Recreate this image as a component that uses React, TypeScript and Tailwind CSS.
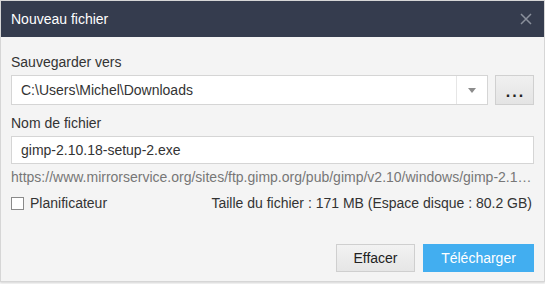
import React from "react";

export default function App() {
  return (
    <div className="w-[545px] h-[284px] bg-[#fafafa]" style={{ fontFamily: '"Liberation Sans", Arial, sans-serif' }}>
      <div className="w-[545px] h-[282px] border border-[#d6d6d6] bg-[#f4f4f4] flex flex-col shadow-[0_1px_2px_rgba(0,0,0,0.15)]">
        <div className="h-[36px] bg-[#353c4e] flex items-center justify-between pl-[10px] pr-[12px]">
          <span className="text-white text-[14px]">Nouveau fichier</span>
          <svg width="12" height="12" viewBox="0 0 12 12" className="text-[#8a909c]">
            <path d="M1 1 L11 11 M11 1 L1 11" stroke="currentColor" strokeWidth="1.5" />
          </svg>
        </div>
        <div className="flex flex-col px-[10px] text-[14px] leading-[16px] text-[#333]">
          <div className="mt-[17px] h-[16px]">Sauvegarder vers</div>
          <div className="mt-[5px] flex gap-[7px]">
            <div className="flex-1 h-[30px] bg-white border border-[#d5d5d5] flex items-center">
              <span className="flex-1 pl-[9px]">C:\Users\Michel\Downloads</span>
              <div className="w-[31px] h-full border-l border-[#e6e6e6] flex items-center justify-center">
                <svg width="8" height="5" viewBox="0 0 8 5"><path d="M0 0 H8 L4 5 Z" fill="#8c8c8c" /></svg>
              </div>
            </div>
            <div className="w-[39px] h-[30px] border border-[#d0d0d0] bg-gradient-to-b from-[#f0f0f0] to-[#e4e4e4] flex items-end justify-center pb-[7px]">
              <span className="text-[#222] text-[16px] font-bold leading-[10px] tracking-[2px] pl-[2px]">...</span>
            </div>
          </div>
          <div className="mt-[10px] h-[16px]">Nom de fichier</div>
          <div className="mt-[5px] h-[28px] bg-white border border-[#d5d5d5] flex items-center pl-[9px]">gimp-2.10.18-setup-2.exe</div>
          <div className="mt-[5px] h-[16px] text-[#777] truncate w-[522px]">https://www.mirrorservice.org/sites/ftp.gimp.org/pub/gimp/v2.10/windows/gimp-2.10.18-setup-2.exe</div>
          <div className="mt-[10px] h-[16px] flex items-center justify-between">
            <div className="flex items-center gap-[6px]">
              <div className="w-[13px] h-[13px] border border-[#8a8a8a] bg-white" />
              <span>Planificateur</span>
            </div>
            <span className="pr-[2px]">Taille du fichier : 171 MB (Espace disque : 80.2 GB)</span>
          </div>
          <div className="mt-[33px] flex justify-end gap-[8px]">
            <div className="w-[79px] h-[28px] border border-[#cfcfcf] bg-gradient-to-b from-[#f2f2f2] to-[#e6e6e6] flex items-center justify-center text-[#222]">Effacer</div>
            <div className="w-[111px] h-[28px] bg-[#42aef0] flex items-center justify-center text-white">Télécharger</div>
          </div>
        </div>
      </div>
    </div>
  );
}
